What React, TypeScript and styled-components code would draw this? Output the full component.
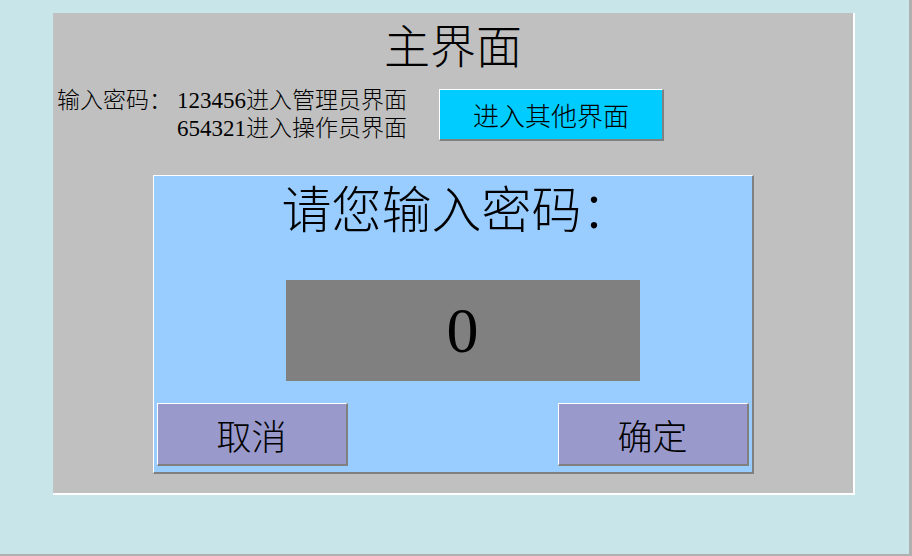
import React from "react";
import styled, { createGlobalStyle } from "styled-components";

const GlobalStyle = createGlobalStyle`
  html, body {
    margin: 0;
    padding: 0;
    background: #c8e6ea;
  }
  * { box-sizing: border-box; }
`;

const FONT = `"Liberation Serif", "Noto Sans CJK SC", serif`;

const Screen = styled.div`
  width: 912px;
  height: 556px;
  background: #c8e6ea;
  border-right: 3px solid #b0b0b0;
  border-bottom: 2px solid #b0b0b0;
  padding: 13px 0 0 53px;
  font-family: ${FONT};
  color: #000;
`;

const Panel = styled.div`
  width: 802px;
  height: 482px;
  background: #c0c0c0;
  border-right: 2px solid #ffffff;
  border-bottom: 2px solid #ffffff;
  display: flex;
  flex-direction: column;
  align-items: center;
`;

const Title = styled.div`
  margin-top: 9px;
  height: 52px;
  line-height: 52px;
  font-size: 46px;
  font-weight: 300;
`;

const InfoRow = styled.div`
  align-self: stretch;
  margin-top: 13px;
  padding-left: 4px;
  display: flex;
  align-items: center;
`;

const InfoGrid = styled.div`
  display: grid;
  grid-template-columns: 120px 262px;
  font-size: 23px;
  line-height: 28px;
  font-weight: 300;
  white-space: nowrap;
`;

const InfoLine = styled.div<{ $indent?: boolean }>`
  grid-column: ${(p) => (p.$indent ? "2" : "auto")};
`;

const RaisedButton = styled.div<{ $bg: string; $w: number; $h: number; $fs: number }>`
  width: ${(p) => p.$w}px;
  height: ${(p) => p.$h}px;
  background: ${(p) => p.$bg};
  border-top: 1px solid #ffffff;
  border-left: 1px solid #ffffff;
  border-right: 2px solid #808080;
  border-bottom: 2px solid #808080;
  display: flex;
  align-items: center;
  justify-content: center;
  font-size: ${(p) => p.$fs}px;
  font-weight: 300;
  cursor: pointer;
  user-select: none;
`;

const Dialog = styled.div`
  margin-top: 32px;
  width: 601px;
  height: 299px;
  background: #99ccff;
  border-top: 1px solid #ffffff;
  border-left: 1px solid #ffffff;
  border-right: 2px solid #808080;
  border-bottom: 2px solid #808080;
  display: flex;
  flex-direction: column;
  padding: 0 3px 6px 3px;
`;

const DialogTitle = styled.div`
  height: 70px;
  line-height: 70px;
  font-size: 50px;
  font-weight: 300;
  text-align: center;
  padding-left: 8px;
`;

const Display = styled.div`
  margin: 34px 0 0 129px;
  width: 354px;
  height: 101px;
  background: #808080;
  display: flex;
  align-items: center;
  justify-content: center;
  font-size: 64px;
  font-family: "Liberation Serif", serif;
`;

const ButtonRow = styled.div`
  margin-top: 22px;
  display: flex;
  justify-content: space-between;
`;

export default function App() {
  return (
    <>
      <GlobalStyle />
      <Screen>
        <Panel>
          <Title>主界面</Title>
          <InfoRow>
            <InfoGrid>
              <InfoLine>输入密码：</InfoLine>
              <InfoLine>123456进入管理员界面</InfoLine>
              <InfoLine $indent>654321进入操作员界面</InfoLine>
            </InfoGrid>
            <RaisedButton $bg="#00ccff" $w={225} $h={52} $fs={26}>
              进入其他界面
            </RaisedButton>
          </InfoRow>
          <Dialog>
            <DialogTitle>请您输入密码：</DialogTitle>
            <Display>0</Display>
            <ButtonRow>
              <RaisedButton $bg="#9999cc" $w={191} $h={63} $fs={35}>
                取消
              </RaisedButton>
              <RaisedButton $bg="#9999cc" $w={191} $h={63} $fs={35}>
                确定
              </RaisedButton>
            </ButtonRow>
          </Dialog>
        </Panel>
      </Screen>
    </>
  );
}
